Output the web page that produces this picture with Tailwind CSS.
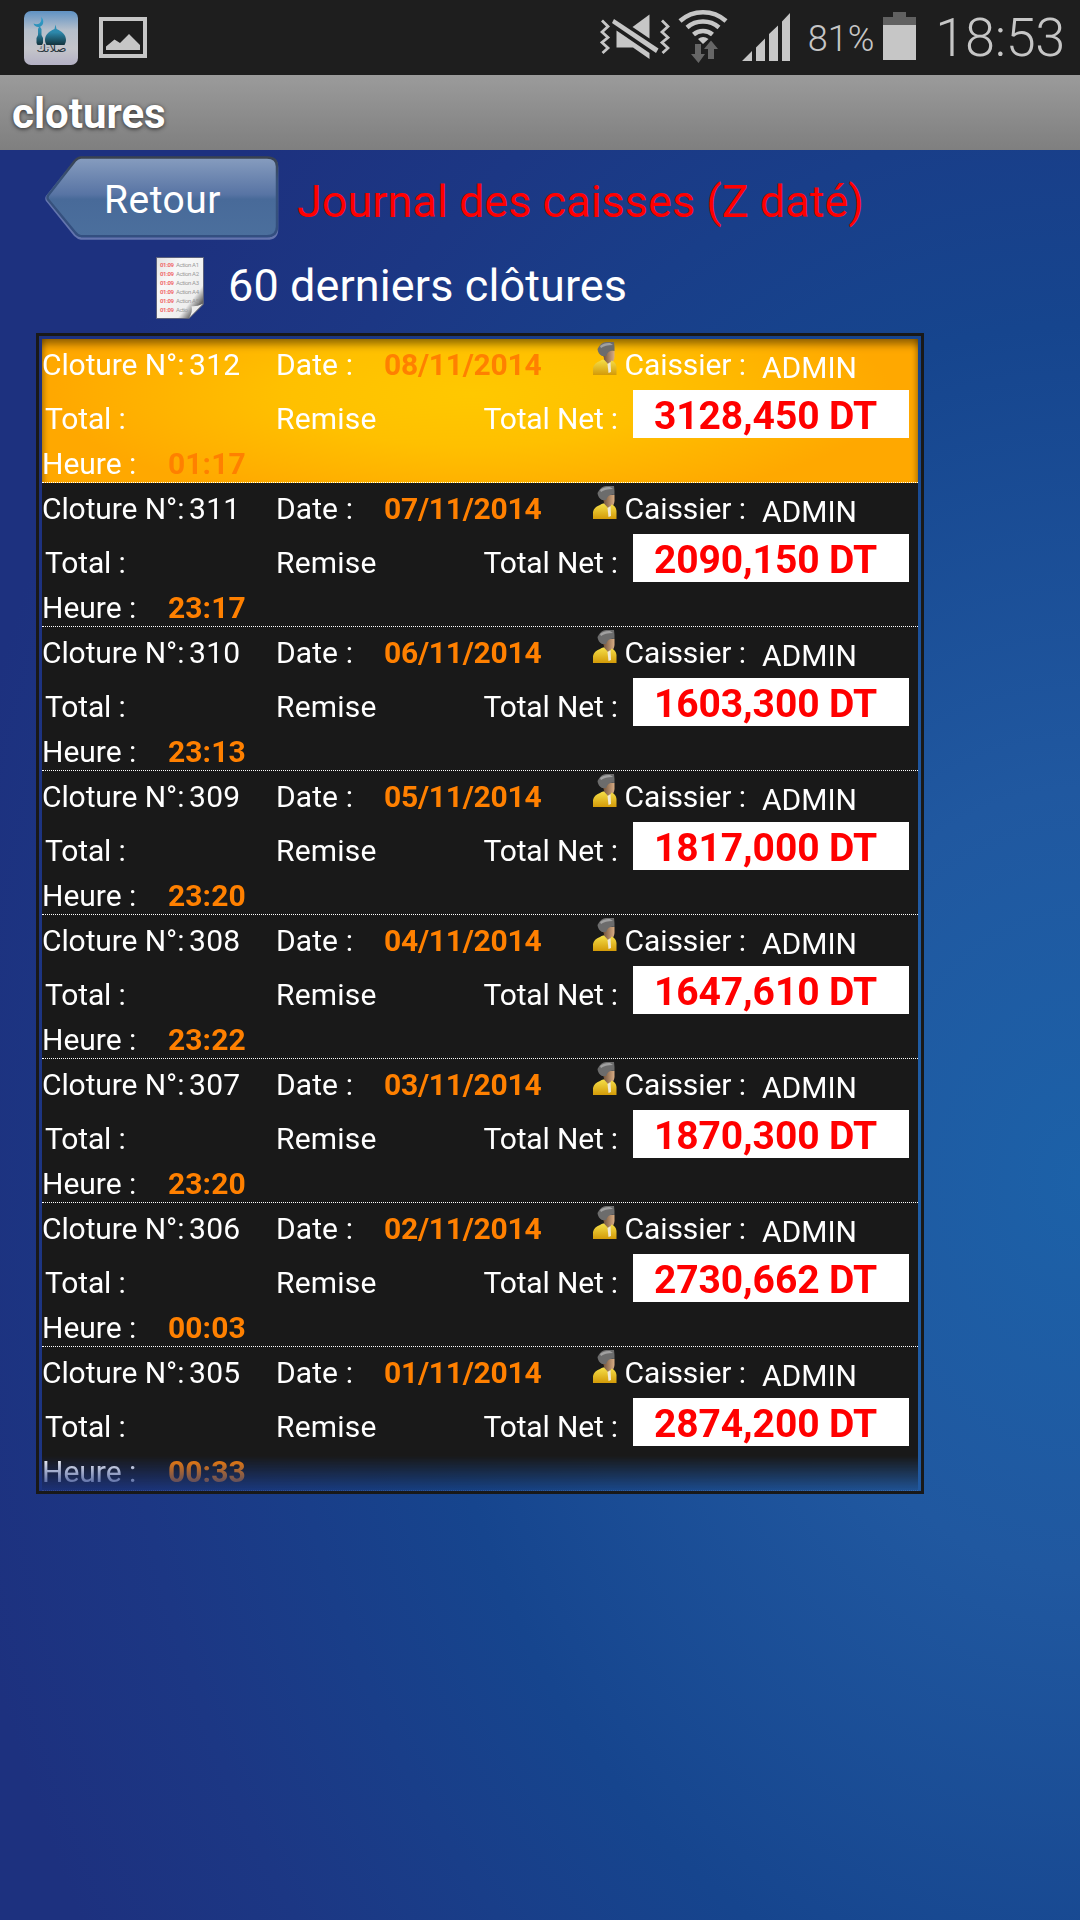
<!DOCTYPE html>
<html lang="fr">
<head>
    <meta charset="UTF-8">
    <meta name="viewport" content="width=device-width, initial-scale=1.0">
    <title>clotures</title>
    <script src="https://cdn.jsdelivr.net/npm/@tailwindcss/browser@4"></script>
</head>
<body class="w-[1080px] h-[1920px] overflow-hidden flex flex-col font-['Roboto',sans-serif] text-white bg-[radial-gradient(1150px_1500px_at_1080px_1180px,#1c61a8_0%,#2058a0_26%,#16458e_57%,#1c3784_84%,#1d317f_100%)]">

    <!-- Status bar -->
    <div class="h-[75px] shrink-0 bg-[#1e1e1e] text-[#c6c6c6] flex items-center justify-between">
        <div class="flex items-center pl-6 gap-[21px]">
            <svg class="w-[54px] h-[54px]" viewBox="0 0 54 54">
                <defs>
                    <linearGradient id="app" x1="0" y1="0" x2="0" y2="1">
                        <stop offset="0" stop-color="#5f92c4"/>
                        <stop offset=".35" stop-color="#b5bfcb"/>
                        <stop offset=".7" stop-color="#c4c5ca"/>
                        <stop offset="1" stop-color="#b3b0c4"/>
                    </linearGradient>
                    <linearGradient id="dome" gradientUnits="userSpaceOnUse" x1="0" y1="6" x2="0" y2="34">
                        <stop offset="0" stop-color="#2f9fce"/>
                        <stop offset=".55" stop-color="#2c87aa"/>
                        <stop offset="1" stop-color="#12333c"/>
                    </linearGradient>
                </defs>
                <rect width="54" height="54" rx="7" fill="url(#app)"/>
                <g fill="url(#dome)">
                    <path d="M17 6C21 9 19.500 16 14.500 16C12 16 10 14.500 9.500 12.500C15 15 18.500 11 17 6Z"/>
                    <path d="M15.500 15L17.500 18V24L19 27V32L18 34H13.500L12.500 32V27L14 24V18Z"/>
                    <path d="M31.500 13.500L32.500 18C37 20 42 23 42 29C42 31 41 33 40.500 34H22.500C22 33 21 31 21 29C21 23 26 20 30.500 18Z"/>
                </g>
                <text x="27.500" y="41" text-anchor="middle" textLength="30" lengthAdjust="spacingAndGlyphs" font-family="DejaVu Sans, sans-serif" font-size="10" fill="#26343c">صلاتك</text>
            </svg>
            <svg class="w-12 h-[41px]" viewBox="0 0 48 41">
                <path d="M0 0H48V41H0ZM4 4V37H44V4Z" fill="#c6c6c6" fill-rule="evenodd"/>
                <path d="M7 33V29.500L15.500 22.500L21 26L30 17L41 28V33Z" fill="#c6c6c6"/>
            </svg>
        </div>
        <div class="flex items-center h-full">
            <!-- Muted, vibrating -->
            <svg class="w-[70px] h-[75px]" viewBox="0 0 70 75" fill="#c6c6c6">
                <g fill="none" stroke="#c6c6c6" stroke-width="2.800">
                    <path d="M2 20.500L8 26.500L2 32L8 37.500L2 42.500L8 48L2.500 53"/>
                    <path d="M62 20.500L68 26.500L62 32L68 37.500L62 42.500L68 48L62.500 53"/>
                </g>
                <path d="M14 19L58.500 48.500L56 53L12 23Z"/>
                <path d="M49.500 14.500V38.500L32.500 27Z"/>
                <path d="M16.500 30.500L49.500 53V59L33 47.500H16.500Z"/>
            </svg>
            <svg class="w-[50px] h-[75px] ml-2" viewBox="0 0 50 75">
                <g fill="none" stroke="#c6c6c6" stroke-width="4.500">
                    <path d="M2 21A34.500 34.500 0 0 1 48 21"/>
                    <path d="M9 27.500A24.500 24.500 0 0 1 41 27.500"/>
                    <path d="M15.500 34.500A14.500 14.500 0 0 1 34.500 34.500"/>
                </g>
                <path d="M20 39Q25 35 30.500 39L25 44Z" fill="#c6c6c6"/>
                <path d="M17 44H23V54H27L20.500 63L13 54H17Z" fill="#666"/>
                <path d="M33 40.500L40 49H36V59H30V49H26Z" fill="#666"/>
            </svg>
            <svg class="w-12 h-[75px] ml-3.5" viewBox="0 0 48 75" fill="#c6c6c6">
                <path d="M0 61L10 51V61ZM14 61V47.500L23 38.500V61ZM27 61V34L36 25.500V61ZM40 61V21.500L48 13V61Z"/>
            </svg>
            <span class="text-[36px] leading-[75px] font-light pt-[3px] ml-[18px]">81%</span>
            <svg class="w-[33px] h-[75px] ml-[9px]" viewBox="0 0 33 75">
                <path d="M10 12H23V17H33V25H0V17H10Z" fill="#616161"/>
                <rect y="25" width="33" height="35" fill="#c6c6c6"/>
            </svg>
            <span class="text-[54px] leading-[75px] font-light tracking-[-0.3px] ml-[19px] mr-[15px]">18:53</span>
        </div>
    </div>

    <!-- Title bar -->
    <div class="h-[75px] shrink-0 bg-linear-to-b from-[#9b9b9b] to-[#7f7f7f] pl-3 pt-[2px]">
        <h1 class="text-[42px] leading-[73px] font-bold [text-shadow:0_1px_4px_rgba(0,0,0,0.7)]">clotures</h1>
    </div>

    <!-- Header -->
    <div class="flex items-start pt-[6px] pl-[45px]">
        <button class="w-[234px] h-[84px] grid">
            <svg class="col-start-1 row-start-1 w-[234px] h-[84px]" viewBox="0 0 234 87" preserveAspectRatio="none">
                <defs>
                    <linearGradient id="btn" x1="0" y1="0" x2="0" y2="1">
                        <stop offset="0" stop-color="#879dbf"/>
                        <stop offset=".47" stop-color="#5874a4"/>
                        <stop offset=".53" stop-color="#486a99"/>
                        <stop offset="1" stop-color="#4b6f9d"/>
                    </linearGradient>
                    <linearGradient id="edge" x1="0" y1="0" x2="0" y2="1">
                        <stop offset="0" stop-color="#3a4350"/>
                        <stop offset=".3" stop-color="#38527a"/>
                        <stop offset="1" stop-color="#334f80"/>
                    </linearGradient>
                </defs>
                <path d="M36 2.500H222Q232 2.500 232 12V76Q232 85.500 222 85.500H36Q33 85 30 82L2 46Q1 44 2 42L30 6Q33 2.500 36 2.500Z" fill="none" stroke="#6475ae" stroke-width="2.500"/>
                <path d="M36 1.500H222Q232 1.500 232 11V73Q232 83 222 83H36Q33 83 30 79L3 45Q2 43 3 41L30 5Q33 1.500 36 1.500Z" fill="url(#btn)" stroke="url(#edge)" stroke-width="2.500"/>
            </svg>
            <span class="col-start-1 row-start-1 text-[39px] leading-[84px] tracking-[0.5px] text-left pl-[59px] pt-[2px]">Retour</span>
        </button>
        <h2 class="text-[45px] leading-[84px] text-[#ff0000] pt-[4px] ml-[18px] h-[84px]">Journal des caisses (Z daté)</h2>
    </div>
    <div class="flex items-center h-[62px] mt-[17px] pl-[156px]">
        <svg class="w-12 h-[62px]" viewBox="0 0 48 63" preserveAspectRatio="none">
            <defs>
                <linearGradient id="page" x1="0" y1="0" x2="1" y2="1">
                    <stop offset="0" stop-color="#e2e2e2"/>
                    <stop offset=".3" stop-color="#f8f8f8"/>
                    <stop offset=".72" stop-color="#eee"/>
                    <stop offset=".85" stop-color="#666"/>
                </linearGradient>
            </defs>
            <path d="M.5 .5H47.500V48L33 62.500H.5Z" fill="url(#page)" stroke="#5a607a"/>
            <g font-family="Roboto, sans-serif" font-size="6" id="page-lines"></g>
            <path d="M33 62Q37 56 35.500 50Q41 50.500 47 47.500Z" fill="#ececec"/>
        </svg>
        <span class="text-[45px] leading-[62px] tracking-[0.1px] ml-[24px] -mt-[4px]">60 derniers clôtures</span>
    </div>

    <!-- List of closings -->
    <div class="w-[888px] h-[1161px] mt-[14px] ml-9 shrink-0 border-3 border-[#191919] p-[3px] pb-0">
        <div id="list" class="h-[1152px] overflow-hidden text-[30px] whitespace-nowrap [mask-image:linear-gradient(to_bottom,black_1117px,rgb(0_0_0/0.08)_1152px)]"></div>
    </div>

<script>
const closings = [
    ['312', '08/11/2014', '3128,450 DT', '01:17'],
    ['311', '07/11/2014', '2090,150 DT', '23:17'],
    ['310', '06/11/2014', '1603,300 DT', '23:13'],
    ['309', '05/11/2014', '1817,000 DT', '23:20'],
    ['308', '04/11/2014', '1647,610 DT', '23:22'],
    ['307', '03/11/2014', '1870,300 DT', '23:20'],
    ['306', '02/11/2014', '2730,662 DT', '00:03'],
    ['305', '01/11/2014', '2874,200 DT', '00:33'],
];

const userIcon = `
    <svg class="w-6 h-[33px] mt-[3px]" viewBox="0 0 24 33">
        <defs>
            <linearGradient id="shirt" x1="0" y1="0" x2="0" y2="1">
                <stop offset="0" stop-color="#f6e04a"/>
                <stop offset="1" stop-color="#d39a08"/>
            </linearGradient>
            <linearGradient id="face" x1="0" y1="0" x2="1" y2="0">
                <stop offset="0" stop-color="#5b402c"/>
                <stop offset="1" stop-color="#d9ad85"/>
            </linearGradient>
        </defs>
        <path d="M8 9H21.500V15Q21 20 18 20.500V24H10L11 16Z" fill="url(#face)"/>
        <path d="M4.500 7Q8 0 13 0H21L21.500 5V9Q15 8 13 14L9 14Q5 12 4.500 7Z" fill="#6c6c6c"/>
        <path d="M7 4Q11 .5 17 1L20 3Q12 3 8 6Z" fill="#a0a0a0"/>
        <path d="M0 33V26Q1 21 7 19Q9 17 11 17.500L16 23L18.500 18.500Q23 20 23.500 25V33Z" fill="url(#shirt)"/>
        <path d="M14.500 22L17.500 20L18 30L15.500 31Z" fill="#f0ead8"/>
    </svg>`;

document.getElementById('list').innerHTML = closings.map(([num, date, total, time], i) => `
    <div class="h-36 flex flex-col border-b border-dotted border-white ${i === 0
        ? 'bg-[radial-gradient(420px_115px_at_430px_55px,#ffc800_0%,#ffc000_45%,#ffa800_100%)] shadow-[inset_0_10px_9px_-5px_rgb(0_0_0/0.45),inset_7px_0_6px_-6px_rgb(0_0_0/0.35),inset_-7px_0_6px_-6px_rgb(0_0_0/0.35)]'
        : 'bg-[#191919]'}">
        <div class="h-[51px] leading-[51px] grid grid-cols-[147px_87px_108px_208.5px_32px_137.5px_1fr]">
            <span class="tracking-[-0.1px]">Cloture N°:</span>
            <span class="tracking-[0.29px]">${num}</span>
            <span class="tracking-[0.1px]">Date :</span>
            <span class="font-bold text-[#ff8000] tracking-[-0.25px]">${date}</span>
            ${userIcon}
            <span class="tracking-[-0.08px]">Caissier :</span>
            <span class="pt-[3px]">ADMIN</span>
        </div>
        <div class="h-12 leading-[58px] grid grid-cols-[231px_207.5px_149.5px_276px] pl-[3px]">
            <span class="tracking-[-0.15px]">Total :</span>
            <span class="tracking-[0.2px]">Remise</span>
            <span class="tracking-[-0.17px]">Total Net :</span>
            <span class="bg-white text-[#ff0000] font-bold text-[39px] leading-[52px] h-12 pl-[21px] tracking-[-0.1px]">${total}</span>
        </div>
        <div class="h-[44px] leading-[52px] grid grid-cols-[126px_1fr]">
            <span>Heure :</span>
            <span class="font-bold text-[#ff8000] tracking-[0.1px]">${time}</span>
        </div>
    </div>`).join('');

// Lines printed on the sheet icon
document.getElementById('page-lines').innerHTML = [1, 2, 3, 4, 5, 6].map(n => `
    <text x="4" y="${1.5 + n * 9.1}" textLength="14" fill="#f06a6a" font-weight="700">01:09</text>
    <text x="20" y="${1.5 + n * 9.1}" textLength="${n > 5 ? 12 : 23}" fill="#999">${n > 5 ? 'Actio' : 'Action A' + n}</text>`).join('');
</script>
</body>
</html>
